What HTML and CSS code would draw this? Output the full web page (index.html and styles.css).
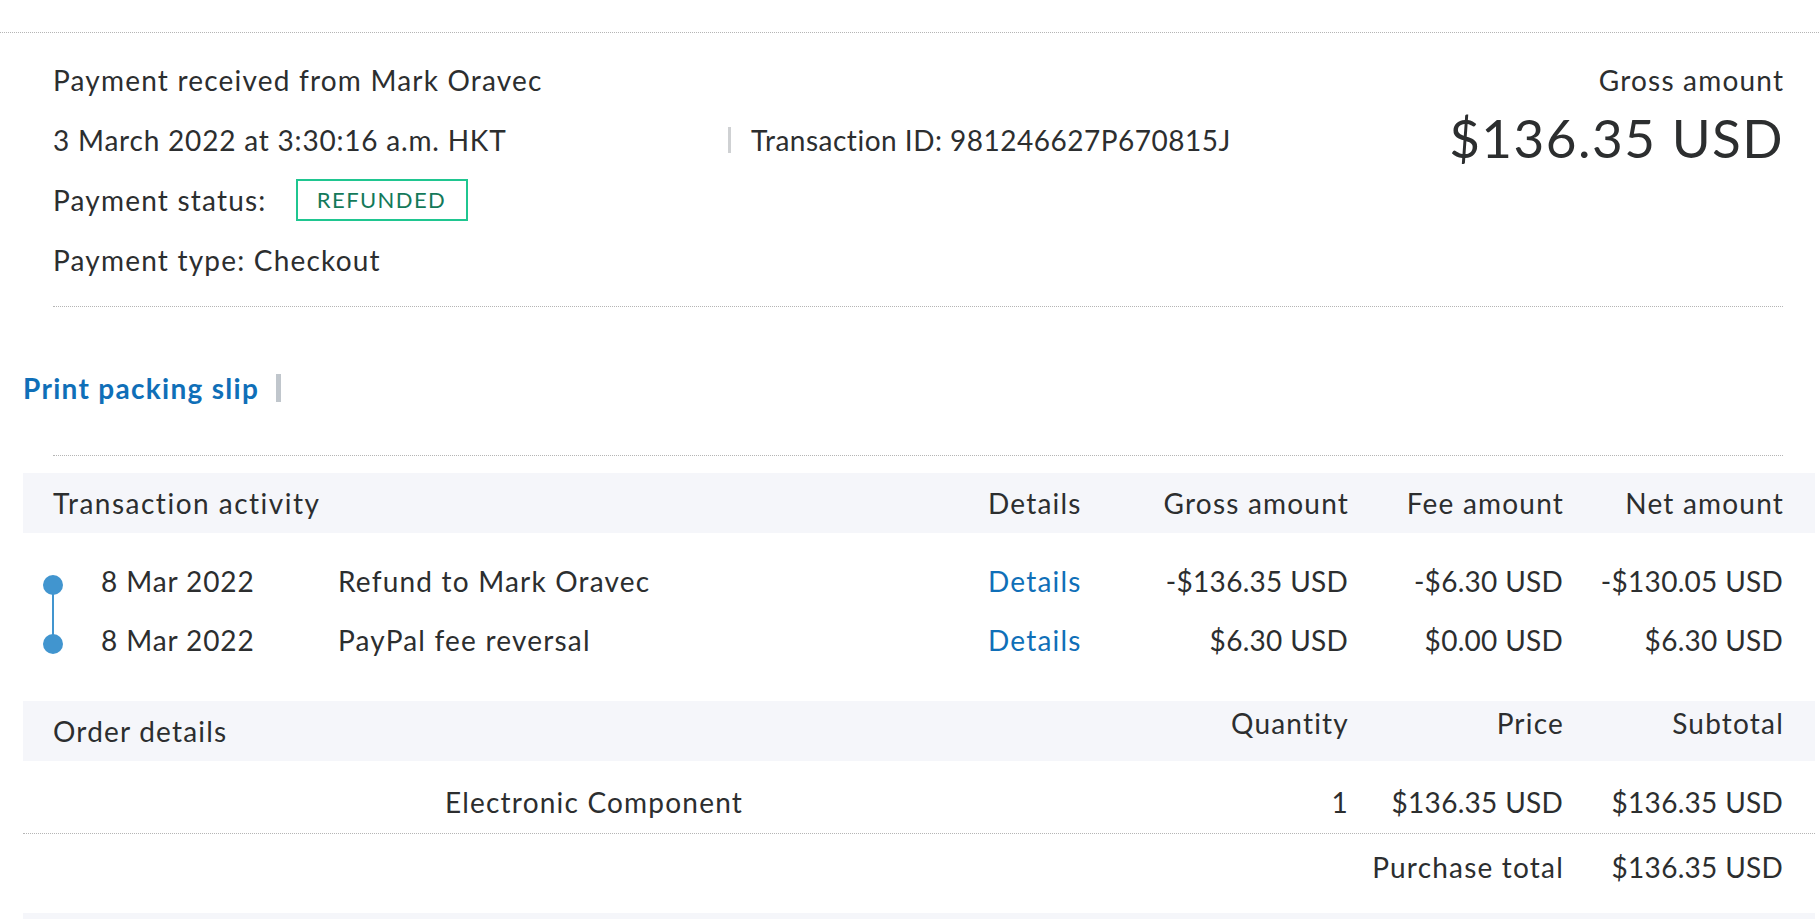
FILE: index.html
```html
<!DOCTYPE html>
<html lang="en">
<head>
<meta charset="utf-8">
<title>Transaction details</title>
<link rel="stylesheet" href="styles.css">
</head>
<body>
<div class="page">
  <section class="summary">
    <div class="summary-left">
      <div class="line">Payment received from Mark Oravec</div>
      <div class="line line-split">
        <span class="date-text">3 March 2022 at 3:30:16 a.m. HKT</span>
        <span class="vsep"></span>
        <span class="txn-id">Transaction ID: 981246627P670815J</span>
      </div>
      <div class="line">
        <span>Payment status:</span>
        <span class="badge">REFUNDED</span>
      </div>
      <div class="line">Payment type: Checkout</div>
    </div>
    <div class="summary-right">
      <div class="line">Gross amount</div>
      <div class="big-amount">$136.35 USD</div>
    </div>
  </section>

  <div class="actions">
    <a class="action-link" href="#">Print packing slip</a>
    <span class="action-sep"></span>
  </div>
  <div class="divider"></div>

  <section class="activity">
    <div class="grid act-head">
      <div class="head-title">Transaction activity</div>
      <div class="c-details">Details</div>
      <div class="num">Gross amount</div>
      <div class="num">Fee amount</div>
      <div class="num">Net amount</div>
    </div>
    <div class="act-body">
      <div class="grid act-row">
        <div class="dot-cell"><span class="dot"></span><span class="stem"></span></div>
        <div class="date">8 Mar 2022</div>
        <div>Refund to Mark Oravec</div>
        <div class="c-details"><a href="#" class="link">Details</a></div>
        <div class="num amt">-$136.35 USD</div>
        <div class="num amt">-$6.30 USD</div>
        <div class="num amt">-$130.05 USD</div>
      </div>
      <div class="grid act-row">
        <div class="dot-cell"><span class="dot"></span></div>
        <div class="date">8 Mar 2022</div>
        <div>PayPal fee reversal</div>
        <div class="c-details"><a href="#" class="link">Details</a></div>
        <div class="num amt">$6.30 USD</div>
        <div class="num amt">$0.00 USD</div>
        <div class="num amt">$6.30 USD</div>
      </div>
    </div>
  </section>

  <section class="order">
    <div class="ogrid order-head">
      <div class="order-title">Order details</div>
      <div class="num">Quantity</div>
      <div class="num">Price</div>
      <div class="num">Subtotal</div>
    </div>
    <div class="ogrid order-item">
      <div></div>
      <div>Electronic Component</div>
      <div class="num amt">1</div>
      <div class="num amt">$136.35 USD</div>
      <div class="num amt">$136.35 USD</div>
    </div>
    <div class="ogrid order-total">
      <div></div>
      <div></div>
      <div></div>
      <div class="num">Purchase total</div>
      <div class="num amt">$136.35 USD</div>
    </div>
  </section>
  <div class="bottom-bar"></div>
</div>
</body>
</html>
```

FILE: styles.css
```css
* { box-sizing: border-box; }

html, body {
  margin: 0;
  background: #ffffff;
}

body {
  font-family: Lato, "Noto Sans", sans-serif;
  font-size: 28px;
  letter-spacing: 1.2px;
  color: #2c2e2f;
}

a { text-decoration: none; }

.page {
  margin-top: 32px;
  border-top: 1px dotted #b5b5b5;
  padding: 0 4px 0 23px;
}

/* ---------- summary ---------- */
.summary {
  margin: 0 32px 0 30px;
  padding: 17px 0 16px;
  border-bottom: 1px dotted #b5b5b5;
  display: flex;
  justify-content: space-between;
}

.line {
  height: 60px;
  line-height: 60px;
  display: flex;
  align-items: center;
  white-space: nowrap;
}

.line-split .date-text {
  width: 675px;
  letter-spacing: 0.8px;
}

.txn-id {
  letter-spacing: 0.5px;
}

.vsep {
  width: 3px;
  height: 26px;
  background: #cfd1d3;
  margin-right: 20px;
}

.badge {
  margin-left: 29px;
  height: 42px;
  width: 172px;
  border: 2px solid #1fc690;
  color: #13795a;
  font-size: 22px;
  letter-spacing: 1.4px;
  line-height: 38px;
  text-align: center;
}

.summary-right {
  display: flex;
  flex-direction: column;
  align-items: flex-end;
}

.summary-right .line,
.big-amount {
  margin-right: -1.2px;
}

.big-amount {
  font-size: 53px;
  letter-spacing: 1.5px;
  line-height: 56px;
  height: 56px;
}

/* ---------- actions ---------- */
.actions {
  padding: 64px 0 50px;
  display: flex;
  align-items: center;
  height: 148px;
}

.action-link {
  color: #0f6fb8;
  font-weight: 700;
  line-height: 34px;
  letter-spacing: 1.3px;
}

.action-sep {
  width: 5px;
  height: 28px;
  background: #c0c6cc;
  margin-left: 17px;
}

.divider {
  margin: 0 32px 0 30px;
  border-top: 1px dotted #b5b5b5;
}

/* ---------- activity ---------- */
.activity {
  margin-top: 17px;
}

.grid {
  display: grid;
  grid-template-columns: 58px 237px 1fr 92px 269px 215px 220px;
  padding: 0 31px 0 20px;
  align-items: center;
}

.act-head {
  height: 60px;
  background: #f5f6fa;
}

.head-title {
  grid-column: 1 / 4;
  padding-left: 10px;
  letter-spacing: 1.5px;
}

.c-details {
  text-align: left;
}

.num {
  text-align: right;
  white-space: nowrap;
}

.amt {
  letter-spacing: 0.3px;
  margin-right: 0.9px;
}

.date {
  letter-spacing: 0.9px;
}

.act-body {
  padding-top: 18px;
}

.act-row {
  height: 59px;
}

.dot-cell {
  position: relative;
  height: 59px;
}

.dot {
  position: absolute;
  left: 0;
  top: 24px;
  width: 20px;
  height: 20px;
  border-radius: 50%;
  background: #4195cf;
}

.stem {
  position: absolute;
  left: 9px;
  top: 34px;
  width: 2px;
  height: 59px;
  background: #4195cf;
}

.link {
  color: #0f6fb8;
}

/* ---------- order ---------- */
.order {
  margin-top: 32px;
}

.ogrid {
  display: grid;
  grid-template-columns: 422px 1fr 200px 215px 220px;
  padding: 0 31px 0 0;
}

.order-head {
  height: 60px;
  background: #f5f6fa;
  align-items: start;
}

.order-head .num {
  line-height: 44px;
}

.order-title {
  grid-column: 1 / 3;
  padding-left: 30px;
  line-height: 60px;
}

.order-item {
  height: 73px;
  padding-top: 11px;
  line-height: 60px;
  border-bottom: 1px dotted #b5b5b5;
}

.order-total {
  padding-top: 3px;
  line-height: 60px;
  height: 79px;
}

.bottom-bar {
  height: 20px;
  background: #f5f6fa;
}
```
